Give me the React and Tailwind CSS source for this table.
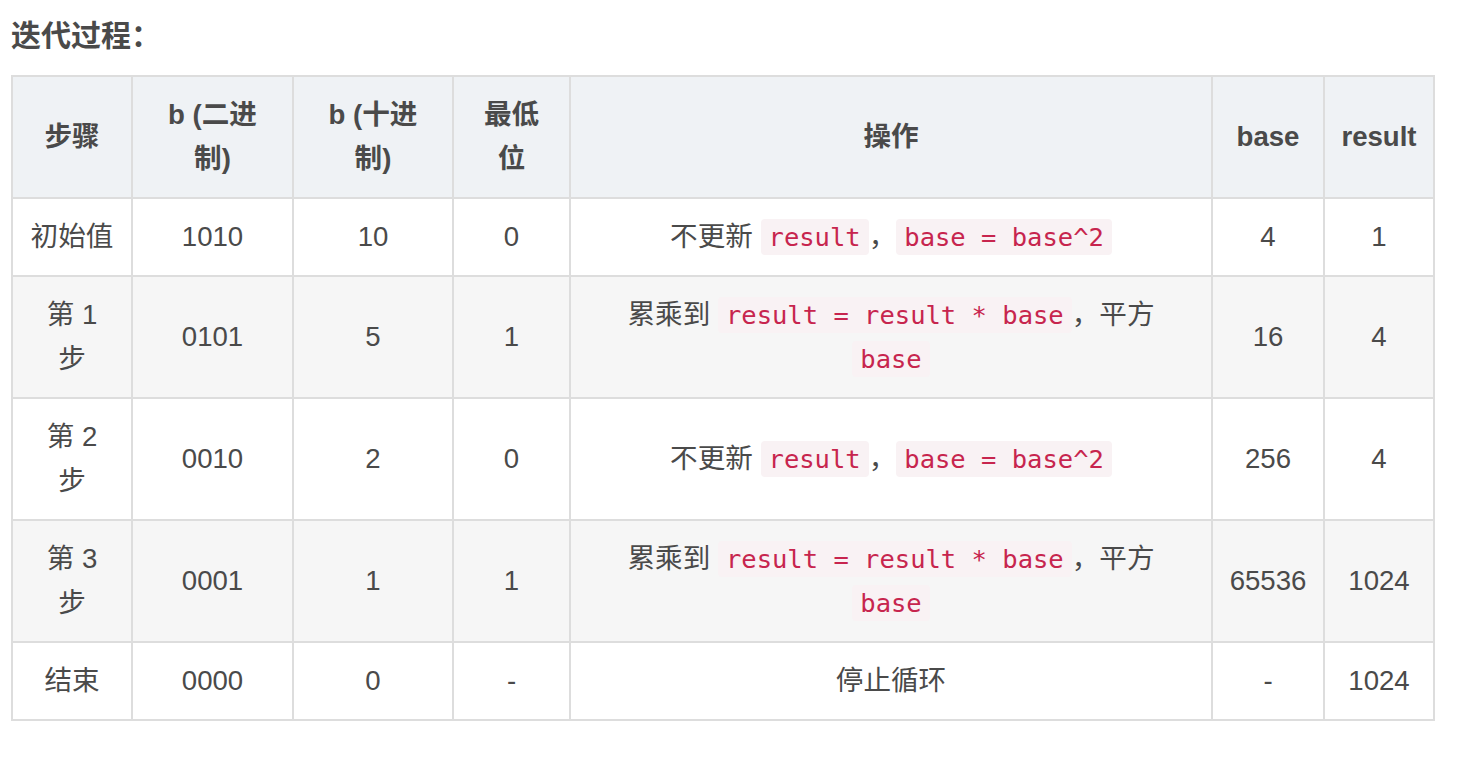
const headers = [
  '\u6B65\u9AA4',
  <>{'b (\u4E8C\u8FDB'}<br />{'\u5236)'}</>,
  <>{'b (\u5341\u8FDB'}<br />{'\u5236)'}</>,
  <>{'\u6700\u4F4E'}<br />{'\u4F4D'}</>,
  '\u64CD\u4F5C',
  'base',
  'result',
];

const Code = ({ children }) => (
  <code className="rounded-[4px] bg-[#f9f2f4] px-[8px] py-[3px] font-['DejaVu_Sans_Mono',monospace] text-[25.5px] text-[#c7254e]">
    {children}
  </code>
);

const skip = (
  <>
    {'\u4E0D\u66F4\u65B0 '}
    <Code>result</Code>
    {'\uFF0C'}
    <Code>base = base^2</Code>
  </>
);

const multiply = (
  <>
    {'\u7D2F\u4E58\u5230 '}
    <Code>result = result * base</Code>
    {'\uFF0C\u5E73\u65B9'}
    <br />
    <Code>base</Code>
  </>
);

const step = (n) => (
  <>
    {'\u7B2C ' + n}
    <br />
    {'\u6B65'}
  </>
);

const rows = [
  ['\u521D\u59CB\u503C', '1010', '10', '0', skip, '4', '1'],
  [step(1), '0101', '5', '1', multiply, '16', '4'],
  [step(2), '0010', '2', '0', skip, '256', '4'],
  [step(3), '0001', '1', '1', multiply, '65536', '1024'],
  ['\u7ED3\u675F', '0000', '0', '-', '\u505C\u6B62\u5FAA\u73AF', '-', '1024'],
];

const widths = ['w-[120px]', 'w-[161px]', 'w-[160px]', 'w-[117px]', 'w-[642px]', 'w-[112px]', 'w-[110px]'];

export default function App() {
  return (
    <div className="min-h-[768px] bg-white px-[11px] pt-[14px] font-['Liberation_Sans','Noto_Sans_CJK_SC',sans-serif] text-[27.6px] leading-[44px] text-[#4a4a4a]">
      <p className="text-[30px] font-bold">{'\u8FED\u4EE3\u8FC7\u7A0B\uFF1A'}</p>
      <table className="mt-[17px] w-[1422px] table-fixed border-collapse border-2 border-[#dddddd]">
        <colgroup>
          {widths.map((w, i) => (
            <col key={i} className={w} />
          ))}
        </colgroup>
        <thead>
          <tr className="bg-[#eff2f5]">
            {headers.map((h, i) => (
              <th key={i} className="border-2 border-[#dddddd] px-[12px] py-[16px] text-center font-bold">
                {h}
              </th>
            ))}
          </tr>
        </thead>
        <tbody>
          {rows.map((row, r) => (
            <tr key={r} className={r % 2 === 1 ? 'bg-[#f6f6f6]' : 'bg-white'}>
              {row.map((cell, c) => (
                <td key={c} className="border-2 border-[#dddddd] px-[12px] py-[16px] text-center">
                  {cell}
                </td>
              ))}
            </tr>
          ))}
        </tbody>
      </table>
    </div>
  );
}
